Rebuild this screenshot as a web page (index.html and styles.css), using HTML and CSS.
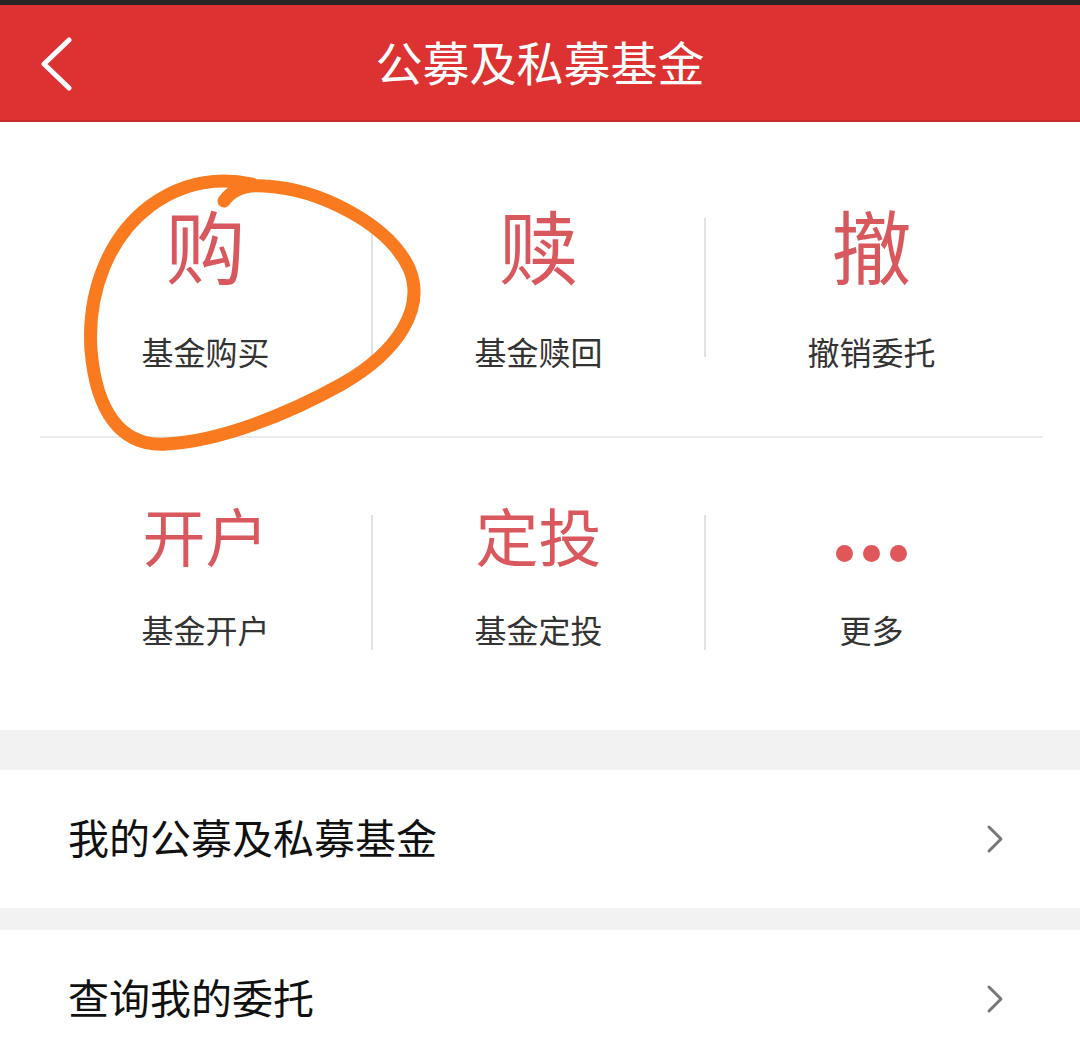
FILE: index.html
```html
<!DOCTYPE html>
<html lang="zh-CN">
<head>
<meta charset="utf-8">
<title>公募及私募基金</title>
<link rel="stylesheet" href="styles.css">
</head>
<body>
<div class="page">
  <div class="statusbar"></div>
  <header class="nav">
    <svg class="back" width="34" height="54" viewBox="0 0 34 54"><polyline points="30,3 5,27 30,51" fill="none" stroke="#fff" stroke-width="5" stroke-linecap="round" stroke-linejoin="round"/></svg>
    <h1 class="title">公募及私募基金</h1>
  </header>

  <section class="grid">
    <div class="row row-top">
      <div class="cell">
        <div class="glyph glyph-lg">购</div>
        <div class="label">基金购买</div>
      </div>
      <div class="vline"></div>
      <div class="cell">
        <div class="glyph glyph-lg">赎</div>
        <div class="label">基金赎回</div>
      </div>
      <div class="vline"></div>
      <div class="cell">
        <div class="glyph glyph-lg">撤</div>
        <div class="label">撤销委托</div>
      </div>
    </div>
    <div class="hline"></div>
    <div class="row row-bottom">
      <div class="cell">
        <div class="glyph glyph-md">开户</div>
        <div class="label">基金开户</div>
      </div>
      <div class="vline"></div>
      <div class="cell">
        <div class="glyph glyph-md">定投</div>
        <div class="label">基金定投</div>
      </div>
      <div class="vline"></div>
      <div class="cell">
        <div class="dots"><span></span><span></span><span></span></div>
        <div class="label">更多</div>
      </div>
    </div>
  </section>

  <div class="gap gap-lg"></div>
  <div class="item">
    <span class="item-text">我的公募及私募基金</span>
    <svg class="chev" width="18" height="30" viewBox="0 0 18 30"><polyline points="3,3 15,15 3,27" fill="none" stroke="#777" stroke-width="3" stroke-linecap="round" stroke-linejoin="round"/></svg>
  </div>
  <div class="gap gap-sm"></div>
  <div class="item">
    <span class="item-text">查询我的委托</span>
    <svg class="chev" width="18" height="30" viewBox="0 0 18 30"><polyline points="3,3 15,15 3,27" fill="none" stroke="#777" stroke-width="3" stroke-linecap="round" stroke-linejoin="round"/></svg>
  </div>

  <svg class="scribble" width="1080" height="1043" viewBox="0 0 1080 1043">
    <path d="M224 201 C231 191 244 184 265 186 C320 189 388 224 409 268 C426 308 398 352 342 384 C290 413 222 441 166 444 C120 447 96 410 91 350 C87 290 110 236 150 206 C180 184 214 176 252 184" fill="none" stroke="#f97a1f" stroke-width="13" stroke-linecap="round" stroke-linejoin="round"/>
  </svg>
</div>
</body>
</html>
```

FILE: styles.css
```css
* { box-sizing: border-box; }
html, body { margin: 0; padding: 0; background: #fff; }
body {
  font-family: "Noto Sans CJK SC", "Noto Sans", sans-serif;
  width: 1080px;
  height: 1043px;
  overflow: hidden;
}
.page { position: relative; width: 1080px; height: 1043px; overflow: hidden; }

.statusbar { height: 5px; background: #2a2626; }

.nav {
  height: 117px;
  background: #dd3232;
  border-bottom: 2px solid #c72b2b;
  display: flex;
  align-items: center;
  justify-content: center;
  position: relative;
}
.back { position: absolute; left: 39px; top: 32px; }
.title {
  margin: 0;
  color: #fff;
  font-size: 47px;
  font-weight: 400;
  line-height: 1;
  margin-top: -4px;
}

.grid { padding: 0 37px 0 40px; }
.row {
  display: grid;
  grid-template-columns: 331px 2px 331px 2px 331px;
}
.row-top { height: 314px; }
.row-bottom { height: 292px; }
.cell {
  display: flex;
  flex-direction: column;
  align-items: center;
}
.row-top .cell { padding-top: 81px; }
.row-bottom .cell { padding-top: 64px; }

.vline { background: #e2e2e2; width: 2px; }
.row-top .vline { height: 139px; margin-top: 96px; }
.row-bottom .vline { height: 135px; margin-top: 77px; }

.hline { height: 2px; background: #ebebeb; }

.glyph { color: #d9585d; line-height: 1; }
.glyph-lg { font-size: 80px; }
.glyph-md { font-size: 63px; height: 64px; }
.row-top .label { margin-top: 52px; }
.row-bottom .label { margin-top: 47px; }
.label { font-size: 32px; line-height: 1; color: #333; }

.dots {
  height: 64px;
  display: flex;
  align-items: flex-end;
  gap: 10px;
  padding-bottom: 4px;
}
.dots span {
  width: 17px;
  height: 17px;
  border-radius: 50%;
  background: #e0575a;
}

.gap { background: #f2f2f2; }
.gap-lg { height: 40px; }
.gap-sm { height: 22px; }

.item {
  height: 138px;
  display: flex;
  align-items: center;
  justify-content: space-between;
  padding: 0 76px 0 68px;
}
.item-text { font-size: 41px; line-height: 1; color: #111; margin-top: -6px; }
.chev { display: block; }

.scribble { position: absolute; left: 0; top: 0; pointer-events: none; }
```
